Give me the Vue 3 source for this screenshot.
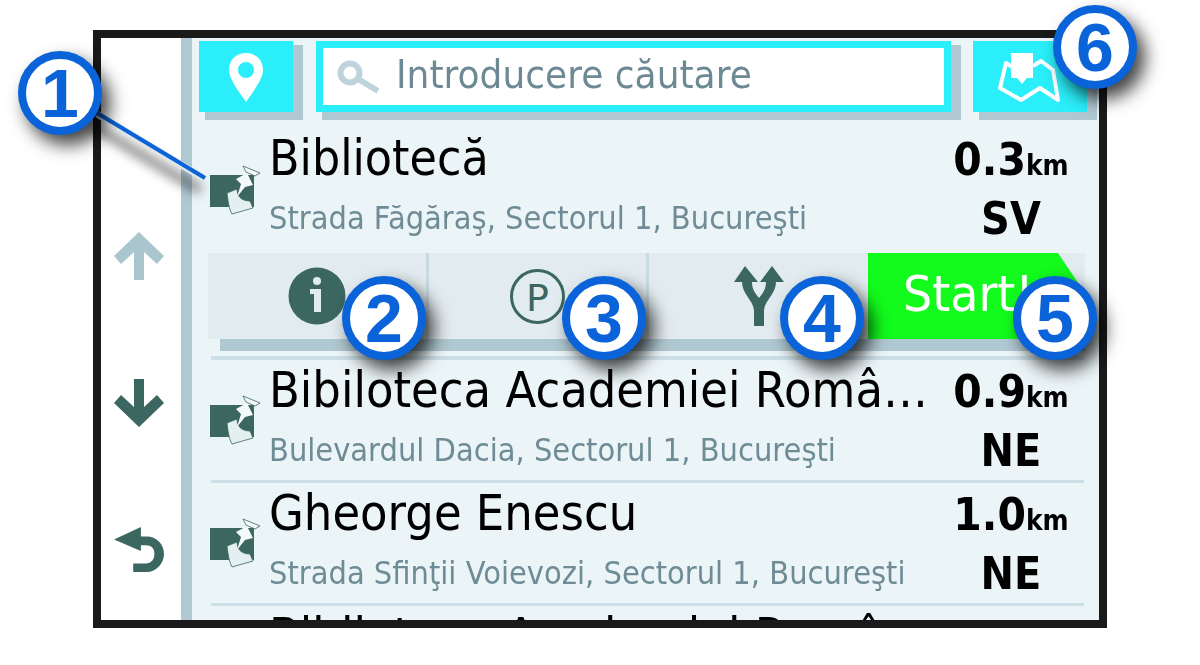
<script setup>
const rows = [
  { title: 'Bibliotecă', sub: 'Strada Făgăraş, Sectorul 1, Bucureşti', dist: '0.3', dir: 'SV' },
  { title: 'Bibiloteca Academiei Româ…', sub: 'Bulevardul Dacia, Sectorul 1, Bucureşti', dist: '0.9', dir: 'NE' },
  { title: 'Gheorge Enescu', sub: 'Strada Sfinţii Voievozi, Sectorul 1, Bucureşti', dist: '1.0', dir: 'NE' },
  { title: 'Biblioteca Academiei Româ…' }
]
const callouts = [
  { n: 1, x: 60, y: 93 },
  { n: 2, x: 384, y: 318 },
  { n: 3, x: 604, y: 318 },
  { n: 4, x: 822, y: 318 },
  { n: 5, x: 1055, y: 318 },
  { n: 6, x: 1095, y: 47 }
]
</script>

<template>
  <div class="page">
    <div class="frame">
      <aside class="side">
        <svg class="nav" viewBox="0 0 50 48"><path d="M25 0 50 24 43 32 30 20V48H20V20L7 32 0 24Z" fill="#a9c6cf" /></svg>
        <svg class="nav" viewBox="0 0 50 48"><path d="M25 48 0 24 7 16 20 28V0H30V28L43 16 50 24Z" fill="#3b6760" /></svg>
        <svg class="nav" viewBox="0 0 52 48"><path d="M0 13 28 0V10H34C44 10 52 18 52 28S44 47 34 47H20V38H33C39 38 42 34 42 28S39 19 33 19H28V25Z" fill="#3b6760" /></svg>
      </aside>
      <div class="strip"></div>
      <main class="content">
        <div class="topbar">
          <div class="btn pin">
            <svg width="36" height="50" viewBox="0 0 36 50"><path fill-rule="evenodd" d="M18 1C8 1 1 8 1 18 1 27 11 40 18 50 25 40 35 27 35 18 35 8 28 1 18 1ZM18 10A8 8 0 1 1 18 26 8 8 0 1 1 18 10Z" fill="#fff" /></svg>
          </div>
          <div class="search">
            <svg class="glass" width="44" height="34" viewBox="0 0 44 34"><circle cx="13" cy="13" r="9.5" fill="none" stroke="#bfd3dc" stroke-width="6" /><path d="M21 19 41 31" stroke="#bfd3dc" stroke-width="6" /></svg>
            <span class="tall">Introducere căutare</span>
          </div>
          <div class="btn map">
            <svg width="64" height="54" viewBox="0 0 64 54">
              <path d="M16 18 8 13 2 38 23 50 42 38 60 50 55 20 43 11 35 16" fill="none" stroke="#fff" stroke-width="4" stroke-linejoin="round" />
              <path d="M13 3H35V28H29L24 34 19 28H13Z" fill="#fff" />
            </svg>
          </div>
        </div>

        <template v-for="(row, i) in rows" :key="i">
          <section class="row" :class="{ first: i === 0 }">
            <svg class="poi" width="52" height="50" viewBox="0 0 52 50">
              <path d="M0 10H44V42H0Z" fill="#3b6760" />
              <path d="M17 28 27 24C27 31 31 36 40 36L43 43 22 49C19 44 18 36 17 28Z" fill="#e4efef" stroke="#3b6760" stroke-width=".8" />
              <path d="M26 14 37 8 43 20 35 22 27 32 31 19Z" fill="#f4f9f9" />
              <path d="M33 1 50 8 45 11 36 7Z" fill="#f4f9f9" stroke="#3b6760" stroke-width=".8" stroke-linejoin="round" />
            </svg>
            <div class="texts">
              <div class="title">{{ row.title }}</div>
              <div v-if="row.sub" class="sub">{{ row.sub }}</div>
            </div>
            <div v-if="row.dist" class="meta">
              <div class="dist">{{ row.dist }}<small>km</small></div>
              <div class="dir">{{ row.dir }}</div>
            </div>
          </section>

          <div v-if="i === 0" class="actions">
            <div class="cell">
              <svg width="58" height="58" viewBox="0 0 58 58"><circle cx="29" cy="29" r="28.5" fill="#3b6760" /><circle cx="29" cy="14" r="4" fill="#e2ebef" /><path d="M22 22H33V45H26V27H22Z" fill="#e2ebef" /></svg>
            </div>
            <div class="cell">
              <svg width="55" height="55" viewBox="0 0 55 55"><circle cx="27.5" cy="27.5" r="26" fill="none" stroke="#3b6760" stroke-width="3" /><text x="27.5" y="42" text-anchor="middle" class="ptext">P</text></svg>
            </div>
            <div class="cell last">
              <svg width="50" height="60" viewBox="0 0 50 60"><path d="M0 16 11 0 24 16H18C18 22 20 26 25 32 30 26 32 22 32 16H26L38 0 50 16H42C42 28 31 34 30 44V60H20V44C19 34 8 28 8 16Z" fill="#3b6760" /></svg>
            </div>
            <div class="go"><span class="tall">Start!</span></div>
          </div>
          <div class="rule" :class="{ afterbar: i === 0 }"></div>
        </template>
      </main>
    </div>

    <svg class="leader" width="130" height="100" viewBox="0 0 130 100">
      <path class="leader-shade" d="M0 5 108 70" stroke="#000" stroke-opacity=".55" stroke-width="8" transform="translate(-5 9)" />
      <path d="M0 3 108 68" stroke="#dfe6e8" stroke-width="7" />
      <path d="M0 2 108 67" stroke="#0a63d8" stroke-width="4" />
    </svg>

    <div
      v-for="c in callouts"
      :key="c.n"
      class="callout"
      :style="{ left: c.x - 42 + 'px', top: c.y - 42 + 'px' }"
    >{{ c.n }}</div>
  </div>
</template>

<style>
html, body { margin: 0; background: #fff; overflow: hidden; }
</style>

<style scoped>
.page {
  position: relative;
  width: 1200px;
  height: 665px;
  padding: 30px 93px 37px;
  box-sizing: border-box;
  background: #fff;
  overflow: hidden;
  font-family: "DejaVu Sans", sans-serif;
}
.frame {
  display: flex;
  height: 598px;
  box-sizing: border-box;
  border: 8px solid #1a1a1a;
  background: #fff;
  overflow: hidden;
}
.side {
  width: 80px;
  flex: none;
  display: flex;
  flex-direction: column;
  align-items: center;
  gap: 99px;
  padding: 194px 4px 0 0;
  box-sizing: border-box;
}
.nav { width: 50px; height: 48px; display: block; }
.strip { width: 11px; flex: none; background: #b0c8d2; }
.content { flex: 1; background: #ebf4f7; overflow: hidden; }
.topbar { display: flex; padding: 3px 0 0 7px; height: 74px; box-sizing: border-box; }
.btn, .search { height: 71px; box-shadow: 8px 6px 0 2px #b0c8d2; box-sizing: border-box; }
.btn { background: #2aeefa; display: flex; align-items: center; justify-content: center; }
.pin { width: 94px; }
.search {
  width: 635px;
  margin: 0 22px 0 23px;
  border: 7px solid #2aeefa;
  background: #fff;
  display: flex;
  align-items: center;
  padding: 0 0 4px 14px;
  gap: 15px;
  font-size: 36px;
  color: #6d8a94;
}
.glass { flex: none; margin-top: 4px; }
.tall { display: inline-block; transform: scaleY(1.1); }
.map { width: 114px; }
.row {
  display: flex;
  height: 120px;
  margin-left: 18px;
  width: 882px;
}
.row.first { height: 125px; margin-top: 16px; }
.poi { flex: none; margin-top: 35px; }
.row.first .poi { margin-top: 37px; }
.texts { width: 660px; margin-left: 7px; flex: none; }
.title, .sub, .dist, .dir { transform: scaleY(1.1); }
.title { font-size: 45px; line-height: 60px; color: #000; white-space: nowrap; }
.first .title { font-size: 44.5px; }
.sub { font-size: 29px; line-height: 60px; color: #6f8c96; white-space: nowrap; }
.meta { width: 150px; margin-left: 7px; padding-top: 2px; text-align: center; font-weight: 700; color: #000; }
.dist { font-size: 41px; line-height: 60px; }
.dist small { font-size: 25px; }
.dir { font-size: 40px; line-height: 46px; }
.actions {
  display: flex;
  height: 86px;
  margin-left: 16px;
  width: 877px;
  background: #e2ebef;
  box-shadow: 6px 18px 0 -6px #b0c8d2;
}
.cell {
  width: 217.5px;
  border-right: 3px solid #c9dae2;
  display: flex;
  align-items: center;
  justify-content: center;
}
.cell.last { border-right: 0; width: 219px; }
.ptext { font-size: 38px; fill: #3b6760; }
.go {
  flex: 1;
  background: #12fb1c;
  color: #fff;
  font-size: 46px;
  line-height: 80px;
  padding-left: 35px;
  clip-path: polygon(0 0, 190px 0, 217px 40px, 217px 100%, 0 100%);
}
.rule { height: 3px; margin: 0 15px 0 19px; background: #cbdfe7; }
.rule.afterbar { height: 4px; margin-top: 17px; }
.leader { position: absolute; left: 97px; top: 111px; overflow: visible; }
.leader-shade { filter: blur(6px); }
.callout {
  position: absolute;
  width: 84px;
  height: 84px;
  box-sizing: border-box;
  border: 8px solid #0a63d8;
  border-radius: 50%;
  background: #fff;
  box-shadow: 8px 10px 18px rgba(0, 0, 0, .75);
  color: #0a63d8;
  font: 700 68px/68px "Liberation Sans", sans-serif;
  text-align: center;
}
</style>
